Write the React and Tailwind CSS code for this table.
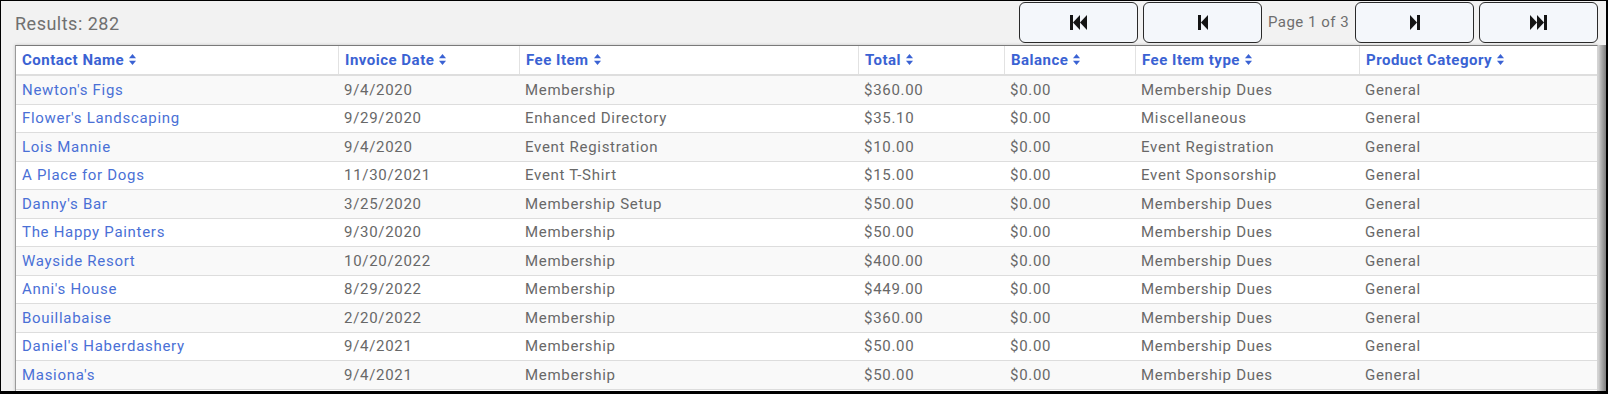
import React from "react";

const rows = [
  ["Newton's Figs", "9/4/2020", "Membership", "$360.00", "$0.00", "Membership Dues", "General"],
  ["Flower's Landscaping", "9/29/2020", "Enhanced Directory", "$35.10", "$0.00", "Miscellaneous", "General"],
  ["Lois Mannie", "9/4/2020", "Event Registration", "$10.00", "$0.00", "Event Registration", "General"],
  ["A Place for Dogs", "11/30/2021", "Event T-Shirt", "$15.00", "$0.00", "Event Sponsorship", "General"],
  ["Danny's Bar", "3/25/2020", "Membership Setup", "$50.00", "$0.00", "Membership Dues", "General"],
  ["The Happy Painters", "9/30/2020", "Membership", "$50.00", "$0.00", "Membership Dues", "General"],
  ["Wayside Resort", "10/20/2022", "Membership", "$400.00", "$0.00", "Membership Dues", "General"],
  ["Anni's House", "8/29/2022", "Membership", "$449.00", "$0.00", "Membership Dues", "General"],
  ["Bouillabaise", "2/20/2022", "Membership", "$360.00", "$0.00", "Membership Dues", "General"],
  ["Daniel's Haberdashery", "9/4/2021", "Membership", "$50.00", "$0.00", "Membership Dues", "General"],
  ["Masiona's", "9/4/2021", "Membership", "$50.00", "$0.00", "Membership Dues", "General"],
];

const headers = ["Contact Name", "Invoice Date", "Fee Item", "Total", "Balance", "Fee Item type", "Product Category"];

const GRID = "grid grid-cols-[322px_181px_339px_146px_131px_224px_1fr]";

function SortIcon() {
  return (
    <svg width="7" height="11" viewBox="0 0 7 11" className="inline-block ml-[5px] -mt-[2px]" fill="currentColor">
      <polygon points="3.5,0 7,4.3 0,4.3" />
      <polygon points="0,6.7 7,6.7 3.5,11" />
    </svg>
  );
}

function FastBack() {
  return (
    <svg width="17" height="15" viewBox="0 0 17 15" fill="#141414">
      <rect x="0" y="0" width="3" height="15" />
      <polygon points="3,7.5 10,0 10,15" />
      <polygon points="10,7.5 17,0 17,15" />
    </svg>
  );
}
function StepBack() {
  return (
    <svg width="10" height="15" viewBox="0 0 10 15" fill="#141414">
      <rect x="0" y="0" width="3" height="15" />
      <polygon points="3,7.5 10,0 10,15" />
    </svg>
  );
}
function StepFwd() {
  return (
    <svg width="10" height="15" viewBox="0 0 10 15" fill="#141414">
      <polygon points="0,0 7,7.5 0,15" />
      <rect x="7" y="0" width="3" height="15" />
    </svg>
  );
}
function FastFwd() {
  return (
    <svg width="17" height="15" viewBox="0 0 17 15" fill="#141414">
      <polygon points="0,0 7,7.5 0,15" />
      <polygon points="7,0 14,7.5 7,15" />
      <rect x="14" y="0" width="3" height="15" />
    </svg>
  );
}

function Btn({ children, className = "" }) {
  return (
    <button
      className={
        "w-[119px] h-[41px] rounded-[6px] border border-[#2a2a2a] bg-[#f4f7fb] flex items-center justify-center " +
        className
      }
    >
      {children}
    </button>
  );
}

export default function App() {
  return (
    <div className="w-[1608px] h-[394px] overflow-hidden bg-[#f2f2f2] border-l border-t border-r-2 border-b-[3px] border-black flex flex-col font-['Roboto',sans-serif] tracking-[0.5px]">
      <div className="h-[44px] shrink-0 flex items-center pl-[14px] pr-[8px]">
        <div className="text-[18px] text-[#707070]">Results: 282</div>
        <div className="ml-auto flex items-center self-start mt-[1px]">
          <Btn>
            <FastBack />
          </Btn>
          <Btn className="ml-[5px]">
            <StepBack />
          </Btn>
          <div className="w-[93px] text-center text-[15px] text-[#6e6e6e]">Page 1 of 3</div>
          <Btn>
            <StepFwd />
          </Btn>
          <Btn className="ml-[5px]">
            <FastFwd />
          </Btn>
        </div>
      </div>
      <div className="flex flex-1 min-h-0 pl-[14px]">
        <div className="w-[1583px] bg-white border-t border-l border-r border-t-[#7a7a7a] border-l-[#9a9a9a] border-r-[#d4d4d4] flex flex-col shadow-[0_0_3px_rgba(0,0,0,0.2)]">
          <div className={GRID + " h-[30px] shrink-0 border-b-2 border-[#dedede] text-[15px] font-bold text-[#3a62d3]"}>
            {headers.map((h, i) => (
              <div
                key={h}
                className={"flex items-center pl-[6px] whitespace-nowrap " + (i > 0 ? "border-l border-[#e2e2e2]" : "")}
              >
                {h}
                <SortIcon />
              </div>
            ))}
          </div>
          {rows.map((r, ri) => (
            <div
              key={ri}
              className={
                GRID +
                " h-[28.5px] shrink-0 border-b border-[#dddddd] text-[15px] tracking-[0.7px] text-[#686868] " +
                (ri % 2 === 0 ? "bg-[#f9f9f9]" : "bg-white")
              }
            >
              {r.map((c, ci) => (
                <div
                  key={ci}
                  className={"flex items-center pl-[6px] whitespace-nowrap " + (ci === 0 ? "text-[#4a70d6]" : "")}
                >
                  {c}
                </div>
              ))}
            </div>
          ))}
        </div>
        <div className="w-[8px] bg-gradient-to-r from-[#d6d6d6] via-[#a8a8a8] to-[#7e7e7e]" />
      </div>
    </div>
  );
}
